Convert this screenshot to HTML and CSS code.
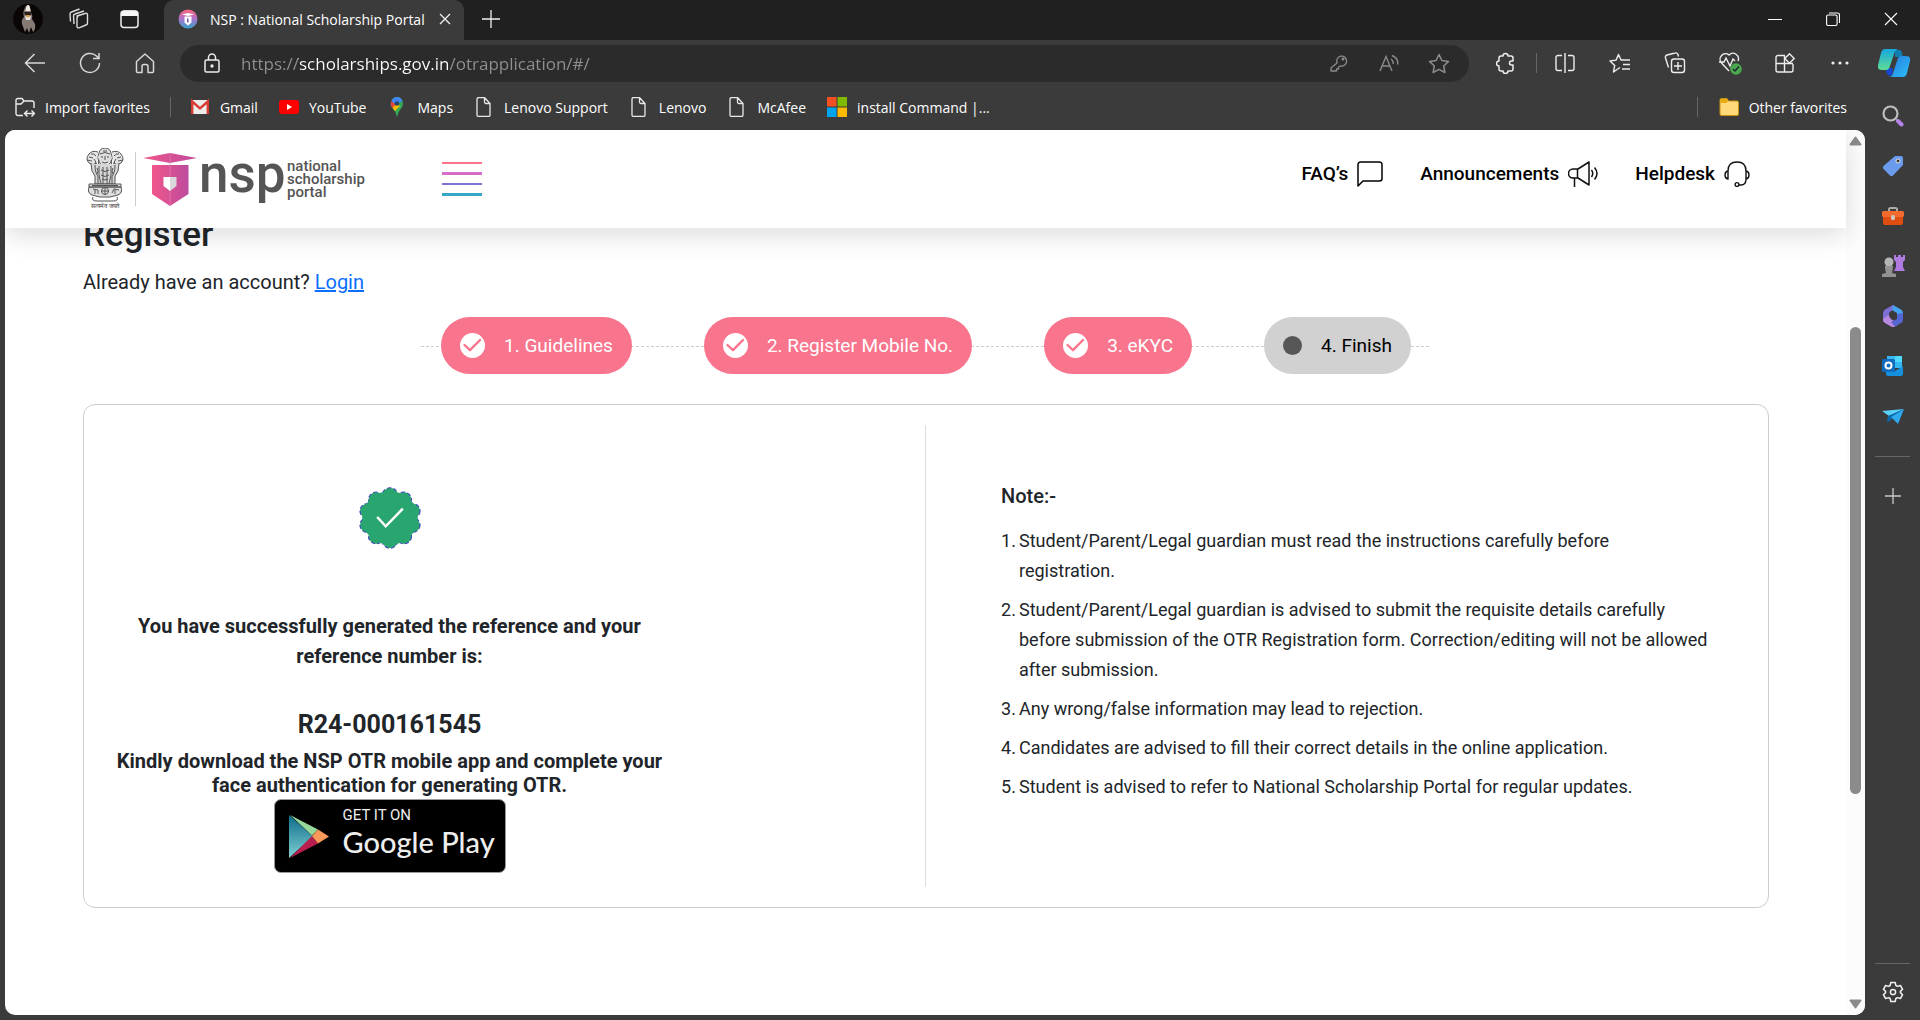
FILE: index.html
```html
<!DOCTYPE html>
<html lang="en">
<head>
<meta charset="utf-8">
<title>NSP : National Scholarship Portal</title>
<link rel="stylesheet" href="styles.css">
</head>
<body>
<svg class="defs" aria-hidden="true">
  <defs>
    <symbol id="doc" viewBox="0 0 20 20"><path d="M4.500 0.500h6l5.500 6v11.500a1.500 1.500 0 0 1-1.500 1.500h-10a1.500 1.500 0 0 1-1.500-1.500v-16a1.500 1.500 0 0 1 1.500-1.500zM10.500 0.500v4.500a1.500 1.500 0 0 0 1.500 1.500h4" fill="none" stroke="#e8e8e8" stroke-width="1.300"/></symbol>
    <symbol id="tick" viewBox="0 0 25 25"><circle cx="12.500" cy="12.500" r="12.500" fill="#fff"/><path d="M4.500 12l5.500 5.200L20 7" fill="none" stroke="#f8758d" stroke-width="2.400" stroke-linecap="round" stroke-linejoin="round"/></symbol>
  </defs>
</svg>
<div class="browser">
  <div class="tabstrip">
    <button class="tbtn" aria-label="Profile"><svg width="30" height="30" viewBox="0 0 30 30"><circle cx="15" cy="15" r="15" fill="#0b0606"/><path d="M13 2q3-2 4 1l1 5q2 4 1 7l3 5q1 5-2 8l-2-5-2 6-2-5-2 4-3-8q-1-4 2-7-2-5 2-11z" fill="#857b74"/><path d="M13.500 2q2-2 3 0l1 5h-5zM12 12q3 1 6 0l-1 4h-4z" fill="#ece8e2"/><path d="M11 8l8 0-1 3-6 0z" fill="#2a211c"/><path d="M13 11l4 0-2 3z" fill="#d99a2b"/></svg></button>
    <button class="tbtn" aria-label="Workspaces"><svg width="24" height="24" viewBox="0 0 24 24" fill="none" stroke="#dcdcdc" stroke-width="1.400" stroke-linejoin="round"><path d="M10 9l8-2.500a1.500 1.500 0 0 1 2.500 1.200v8.300a2 2 0 0 1-1.500 2l-7 2.800a1.500 1.500 0 0 1-2-1.500v-8.500a2 2 0 0 1 1-1.500zM7 17l-.5-8a2 2 0 0 1 1.500-2l9-3M3.500 14.500l-.5-7.500a2 2 0 0 1 1.500-2l8-3"/></svg></button>
    <button class="tbtn" aria-label="Tab actions"><svg width="20" height="20" viewBox="0 0 20 20"><rect x="1" y="2" width="17" height="16.500" rx="3" fill="none" stroke="#eee" stroke-width="1.500"/><path d="M1 7V5a4 4 0 0 1 3-3.500h11A4 4 0 0 1 18 5v2z" fill="#f5f5f5"/></svg></button>
    <div class="tab">
      <svg width="20" height="20" viewBox="0 0 20 20"><defs><linearGradient id="fav" x1="0" y1="0" x2="0" y2="1"><stop offset="0" stop-color="#ff667f"/><stop offset=".5" stop-color="#a873cc"/><stop offset="1" stop-color="#36a5c9"/></linearGradient></defs><circle cx="10" cy="10" r="9.500" fill="url(#fav)"/><path d="M4 5.500l6-1.500 6 1.500-6 1.500zM6.500 7.500h7v6l-3.500 3-3.500-3z" fill="#fff"/><path d="M9 9.500h1.500v4H9z" fill="#765ba0"/></svg>
      <span class="tabtitle">NSP : National Scholarship Portal</span>
      <button class="tabclose" aria-label="Close tab"><svg width="12" height="12" viewBox="0 0 12 12"><path d="M1 1l10 10M11 1L1 11" stroke="#f0f0f0" stroke-width="1.300"/></svg></button>
    </div>
    <button class="newtab" aria-label="New tab"><svg width="18" height="18" viewBox="0 0 18 18"><path d="M9 0v18M0 9h18" stroke="#f0f0f0" stroke-width="1.300"/></svg></button>
    <div class="wincontrols">
      <button class="winbtn" aria-label="Minimize"><svg width="14" height="14" viewBox="0 0 14 14"><path d="M0 7.500h14" stroke="#fff"/></svg></button>
      <button class="winbtn" aria-label="Restore"><svg width="14" height="14" viewBox="0 0 14 14" fill="none" stroke="#fff" stroke-width="1.100"><rect x=".6" y="3" width="10.500" height="10.500" rx="1.500"/><path d="M3 1h8.500a2 2 0 0 1 2 2v8"/></svg></button>
      <button class="winbtn" aria-label="Close"><svg width="14" height="14" viewBox="0 0 14 14"><path d="M1 1l12 12M13 1L1 13" stroke="#fff" stroke-width="1.100"/></svg></button>
    </div>
  </div>

  <div class="toolbar">
    <button class="tool" aria-label="Back"><svg width="22" height="20" viewBox="0 0 22 20" fill="none" stroke="#d8d8d8" stroke-width="1.500"><path d="M21 10H1.500M10.500 1L1.500 10l9 9"/></svg></button>
    <button class="tool" aria-label="Refresh"><svg width="22" height="22" viewBox="0 0 22 22" fill="none" stroke="#d8d8d8" stroke-width="1.500"><path d="M20.500 11a9.500 9.500 0 1 1-3-7l2.500 2.500M20 1v5.500h-6"/></svg></button>
    <button class="tool" aria-label="Home"><svg width="20" height="22" viewBox="0 0 20 22" fill="none" stroke="#d8d8d8" stroke-width="1.500" stroke-linejoin="round"><path d="M1.500 9.500L10 2l8.500 7.500v10a1 1 0 0 1-1 1H13v-6a2 2 0 0 0-2-2H9a2 2 0 0 0-2 2v6H2.500a1 1 0 0 1-1-1z"/></svg></button>
    <div class="address">
      <svg width="16" height="20" viewBox="0 0 16 20" fill="none" stroke="#ededed" stroke-width="1.500"><rect x="1" y="7" width="14" height="12" rx="1.500"/><path d="M4.500 7V4.500a3.500 3.500 0 0 1 7 0V7"/><circle cx="8" cy="13" r=".9" fill="#fff"/></svg>
      <input class="url" type="text" aria-label="Address" value="https://scholarships.gov.in/otrapplication/#/">
      <button class="inbar" aria-label="Passwords"><svg width="18" height="18" viewBox="0 0 18 18" fill="none" stroke="#8c8c8c" stroke-width="1.300"><path d="M7 9a5 5 0 1 1 3.500 3L8.500 13v2h-2v2H1v-3z" stroke-linejoin="round"/><circle cx="13" cy="5" r=".9"/></svg></button>
      <button class="inbar" aria-label="Read aloud"><svg width="20" height="18" viewBox="0 0 20 18" fill="none" stroke="#8c8c8c" stroke-width="1.400"><path d="M1 17L7 2.500 13 17M3.200 12h7.600M12 5q3 2 2 5M13 1.500q7 3 5.500 9"/></svg></button>
      <button class="inbar" aria-label="Add to favorites"><svg width="22" height="21" viewBox="0 0 22 21" fill="none" stroke="#8c8c8c" stroke-width="1.500" stroke-linejoin="round"><path d="M11 1.500l2.900 6 6.600.9-4.800 4.600 1.200 6.500L11 16.400l-5.900 3.100 1.200-6.500L1.500 8.400l6.600-.9z"/></svg></button>
    </div>
    <button class="tool ext" aria-label="Extensions"><svg width="20" height="22" viewBox="0 0 20 22" fill="none" stroke="#ededed" stroke-width="1.500" stroke-linejoin="round"><path d="M5 4h2a2.500 2.500 0 0 1 5 0h3a2 2 0 0 1 2 2v3h-1.500a2 2 0 0 0 0 4H17v4a2 2 0 0 1-2 2h-3a2.500 2.500 0 0 1-5 0H5a2 2 0 0 1-2-2v-3a2.500 2.500 0 0 1 0-5V6a2 2 0 0 1 2-2z"/></svg></button>
    <span class="vline"></span>
    <button class="tool" aria-label="Split screen"><svg width="20" height="20" viewBox="0 0 20 20" fill="none" stroke="#ededed" stroke-width="1.400"><path d="M10 0v20M7 2.500H3A2 2 0 0 0 1 4.500v11a2 2 0 0 0 2 2h4M13 2.500h4a2 2 0 0 1 2 2v11a2 2 0 0 1-2 2h-4"/></svg></button>
    <button class="tool" aria-label="Favorites"><svg width="22" height="20" viewBox="0 0 22 20" fill="none" stroke="#ededed" stroke-width="1.400" stroke-linejoin="round"><path d="M11 14.500l-1.500 1L4.500 19l1.200-6.500L1 8l6-.9L9.500 1.500 12 7h9M14 11.500h7M13 16h8"/></svg></button>
    <button class="tool" aria-label="Collections"><svg width="22" height="22" viewBox="0 0 22 22" fill="none" stroke="#ededed" stroke-width="1.400"><rect x="7.500" y="7" width="13" height="13.500" rx="2.500"/><path d="M14 10v8M10 14h8M4.500 15.500L1.500 6A2.500 2.500 0 0 1 3 3l8-2a2.500 2.500 0 0 1 3 1.500l.5 2"/></svg></button>
    <button class="tool" aria-label="Browser essentials"><svg width="24" height="24" viewBox="0 0 24 24" fill="none" stroke="#ededed" stroke-width="1.400"><path d="M11 20l-7.500-8A5.500 5.500 0 0 1 11 4a5.500 5.500 0 0 1 9 6M1 11h5l2-4 4 8 3-7 2 2"/><circle cx="18" cy="18" r="5.800" fill="#48a94e" stroke="none"/><path d="M15 18l2 2 4-4.500" stroke="#223"/></svg></button>
    <button class="tool" aria-label="Apps"><svg width="20" height="20" viewBox="0 0 20 20" fill="none" stroke="#ededed" stroke-width="1.400"><path d="M10 2.500H3A2 2 0 0 0 1 4.500V17a2 2 0 0 0 2 2h13a2 2 0 0 0 2-2v-6M1 10.500h17M9.500 2.500V19"/><path d="M14.500 0.800L19.200 5.500l-4.700 4.700L9.800 5.500z" fill="#3b3b3b" stroke-linejoin="round"/></svg></button>
    <button class="tool" aria-label="Settings and more"><svg width="18" height="4" viewBox="0 0 18 4" fill="#ededed"><circle cx="2" cy="2" r="1.600"/><circle cx="9" cy="2" r="1.600"/><circle cx="16" cy="2" r="1.600"/></svg></button>
    <button class="copilot" aria-label="Copilot"><svg width="32" height="28" viewBox="0 0 32 28"><defs><linearGradient id="cpa" x1="0" y1="0" x2="0" y2="1"><stop offset="0" stop-color="#15a7e0"/><stop offset="1" stop-color="#60dc94"/></linearGradient><linearGradient id="cpb" x1="0" y1="0" x2="1" y2="1"><stop offset="0" stop-color="#2879e0"/><stop offset="1" stop-color="#2bc0f7"/></linearGradient></defs><path d="M17 1h4q3 0 3 4l1 3h-8z" fill="#0e7fb0"/><path d="M8 19h7l-1 7-3 1q-2-1-3-5z" fill="#1747d1"/><path d="M7 0h13q-3 1-4 5l-4 12q-1 4-4 4H4q-5 0-4-5L3 4q1-4 4-4z" fill="url(#cpa)"/><path d="M25 28H11q3 0 4-4l4-12q1-5 5-5h4q5 0 4 5l-3 12q-1 4-4 4z" fill="url(#cpb)"/></svg></button>
  </div>

  <nav class="favbar" aria-label="Favorites bar">
    <a class="fav" href="#"><svg width="20" height="20" viewBox="0 0 20 20" fill="none" stroke="#ededed" stroke-width="1.400"><path d="M8 18.500H3A2 2 0 0 1 1 16.500V3.500a2 2 0 0 1 2-2h4l2 2.500h8a2 2 0 0 1 2 2V11M1 7h5l3-3M10.500 16.500h8.500M12.500 13.500l-3 3 3 3M16.500 13.500l3 3-3 3"/></svg>Import favorites</a>
    <span class="vline favline"></span>
    <a class="fav" href="#"><svg width="20" height="20" viewBox="0 0 20 20"><path d="M1 3h18v14H1z" fill="#ececec"/><path d="M2.200 17V4.500L10 11.500l7.800-7V17" fill="none" stroke="#d93c32" stroke-width="2.400"/></svg>Gmail</a>
    <a class="fav" href="#"><svg width="20" height="20" viewBox="0 0 20 20"><rect y="3" width="20" height="14" rx="3" fill="#f00"/><path d="M8 7l5 3-5 3z" fill="#fff"/></svg>YouTube</a>
    <a class="fav" href="#"><svg width="20" height="20" viewBox="0 0 20 20"><path d="M10 20q-1-5-4-8.500Q3 7 4.500 4 6 0 10 0t5.500 4Q17 8 14 11.500 11 15 10 20z" fill="#34a853"/><path d="M10 7L4 10Q3 7 4.500 4 6 0 10 0t5.500 4z" fill="#4285f4"/><path d="M4.500 4L9 8l-4 3Q3 7 4.500 4z" fill="#ea4335"/><path d="M5.500 11L10 6l3 3-5 5z" fill="#fbbc04"/><circle cx="10" cy="6.500" r="2.300" fill="#23456b"/></svg>Maps</a>
    <a class="fav" href="#"><svg width="20" height="20"><use href="#doc"/></svg>Lenovo Support</a>
    <a class="fav" href="#"><svg width="20" height="20"><use href="#doc"/></svg>Lenovo</a>
    <a class="fav" href="#"><svg width="20" height="20"><use href="#doc"/></svg>McAfee</a>
    <a class="fav" href="#"><svg width="20" height="20" viewBox="0 0 20 20"><path d="M0 0h9.500v9.500H0z" fill="#f25022"/><path d="M10.500 0H20v9.500h-9.500z" fill="#7fba00"/><path d="M0 10.500h9.500V20H0z" fill="#00a4ef"/><path d="M10.500 10.500H20V20h-9.500z" fill="#ffb900"/></svg>install Command |...</a>
    <span class="vline otherline"></span>
    <a class="fav" href="#"><svg width="20" height="20" viewBox="0 0 20 20"><path d="M1 3a1.500 1.500 0 0 1 1.500-1.500H8l1.500 2.500h8.500a1.500 1.500 0 0 1 1.500 1.500V17a1.500 1.500 0 0 1-1.500 1.500h-15.500A1.500 1.500 0 0 1 1 17z" fill="#ffd97a" stroke="#c9920e"/><path d="M1.500 2h6.500l1 2-1.500 2h-6z" fill="#e9ab12"/></svg>Other favorites</a>
  </nav>

  <div class="workspace">
    <div class="viewport">
      <div class="page">
        <header class="site-header">
          <a class="brand" href="#" aria-label="National Scholarship Portal">
            <span class="emblem">
              <svg width="38" height="54" viewBox="0 0 38 54" fill="none" stroke="#555" stroke-width="1"><path d="M13 5q1-5 6-5t6 5q3 5 0 9-2 4-6 4t-6-4q-3-5 0-9z" fill="#ddd"/><path d="M14 6q5-3 10 0M15 9h2M21 9h2M19 8v4M16 14q3 2 6 0M17 3h4M13 12q-2 3 1 6M25 12q2 3-1 6"/><path d="M12 4Q6 2 3 6q-4 5 0 9 4 3 8 0M26 4q6-2 9 2 4 5 0 9-4 3-8 0" fill="#e4e4e4"/><path d="M3 9l4 1M1 12l5 1M5 6q3-1 5 2M8 11q3 3 1 6M35 9l-4 1M37 12l-5 1M33 6q-3-1-5 2M30 11q-3 3-1 6"/><path d="M5 16q0 8 4 12v8h20v-8q4-4 4-12" fill="#d6d6d6"/><path d="M9 17q0 8 3 11v8M13 18q-1 9 2 18M17 19v17M21 19v17M25 18q1 9-2 18M29 17q0 8-3 11v8M11 20q2 3 0 6M27 20q-2 3 0 6M15 22q4 3 8 0M15 27q4 3 8 0M16 31q3 2 6 0"/><path d="M3 36h32v3H3zM3 39q-2 6 3 8l8 2h10l8-2q5-2 3-8z" fill="#ddd"/><circle cx="19" cy="43" r="3.500"/><path d="M19 39v8M15 43h8M7 41l5 1v4M9 46v-4M26 45l2-4 5 1M29 42v4M7 49q-2 4 4 4h16q6 0 4-4M6 37.500h26" /></svg>
              <span class="motto">सत्यमेव जयते</span>
            </span>
            <span class="brand-line"></span>
            <svg width="54" height="53" viewBox="0 0 54 53"><defs><linearGradient id="nsp" x1="0" y1="0" x2="1" y2="0"><stop offset="0" stop-color="#f1568b"/><stop offset="1" stop-color="#bd4b9e"/></linearGradient></defs><path d="M0 5L27 0l27 5-27 5z" fill="url(#nsp)"/><path d="M9 12h36.500v29L27 53 9 41z" fill="url(#nsp)"/><path d="M27 0v53" stroke="#e486b5" stroke-width=".6"/><path d="M20.500 24H27v14l-6.500-5z" fill="#fff"/><path d="M27 24h6.500v9L27 38z" fill="#dcd7dc"/></svg>
            <span class="wordmark">nsp</span>
            <span class="brand-name">national<br>scholarship<br>portal</span>
          </a>
          <button class="menu" aria-label="Menu"><span class="bar rose"></span><span class="bar orchid"></span><span class="bar violet"></span><span class="bar teal"></span></button>
          <nav class="site-nav" aria-label="Site">
            <a class="navlink" href="#">FAQ’s <svg width="26" height="26" viewBox="0 0 26 26" fill="none" stroke="#000" stroke-width="1.500" stroke-linejoin="round"><path d="M1 25V3.500A2.500 2.500 0 0 1 3.500 1h19A2.500 2.500 0 0 1 25 3.500v14a2.500 2.500 0 0 1-2.500 2.500H6z"/></svg></a>
            <a class="navlink" href="#">Announcements <svg width="30" height="26" viewBox="0 0 30 26" fill="none" stroke="#111" stroke-width="1.500" stroke-linejoin="round"><path d="M10 8L21 1v23l-11-7H5a4.500 4.500 0 0 1 0-9zM9.500 8v9M6.500 17v9M23.500 9q2.500 3.500 0 7M26.500 6.500q5 6 0 12"/></svg></a>
            <a class="navlink" href="#">Helpdesk <svg width="26" height="26" viewBox="0 0 26 26" fill="none" stroke="#111" stroke-width="1.400"><path d="M4 10Q4 1 13 1t9 9v8q0 6-5 6h-2M4 10v8q-3-.5-3-4t3-4zM22 10v8q3-.5 3-4t-3-4z"/><circle cx="13" cy="23.500" r="1.900"/></svg></a>
          </nav>
        </header>

        <main class="content">
          <h1 class="title">Register</h1>
          <p class="account">Already have an account? <a class="login" href="#">Login</a></p>

          <ol class="steps">
            <li class="step"><svg width="25" height="25"><use href="#tick"/></svg>1. Guidelines</li>
            <li class="step"><svg width="25" height="25"><use href="#tick"/></svg>2. Register Mobile No.</li>
            <li class="step"><svg width="25" height="25"><use href="#tick"/></svg>3. eKYC</li>
            <li class="step current"><span class="dot"></span>4. Finish</li>
          </ol>

          <div class="card">
            <section class="result">
              <svg class="seal" width="62" height="62" viewBox="1 0 58 60" preserveAspectRatio="none"><g fill="#29a66f" stroke="#4545c4" stroke-width="1.500" stroke-dasharray="4 2"><circle cx="30" cy="8" r="7"/><circle cx="42.900" cy="12.200" r="7"/><circle cx="17.100" cy="12.200" r="7"/><circle cx="50.900" cy="23.200" r="7"/><circle cx="9.100" cy="23.200" r="7"/><circle cx="50.900" cy="36.800" r="7"/><circle cx="9.100" cy="36.800" r="7"/><circle cx="42.900" cy="47.800" r="7"/><circle cx="17.100" cy="47.800" r="7"/><circle cx="30" cy="52" r="7"/></g><g fill="#29a66f"><circle cx="30" cy="30" r="26"/><circle cx="30" cy="8" r="6.800"/><circle cx="42.900" cy="12.200" r="6.800"/><circle cx="17.100" cy="12.200" r="6.800"/><circle cx="50.900" cy="23.200" r="6.800"/><circle cx="9.100" cy="23.200" r="6.800"/><circle cx="50.900" cy="36.800" r="6.800"/><circle cx="9.100" cy="36.800" r="6.800"/><circle cx="42.900" cy="47.800" r="6.800"/><circle cx="17.100" cy="47.800" r="6.800"/><circle cx="30" cy="52" r="6.800"/></g><path d="M18 29l8 9 16-17" fill="none" stroke="#fff" stroke-width="2.400"/></svg>
              <p class="success">You have successfully generated the reference and your reference number is:</p>
              <h2 class="refno">R24-000161545</h2>
              <p class="download">Kindly download the NSP OTR mobile app and complete your face authentication for generating OTR.</p>
              <a class="play" href="#">
                <svg width="40" height="43" viewBox="0 0 40 43"><defs><linearGradient id="pl" x1="0" y1="0" x2="0" y2="1"><stop offset="0" stop-color="#0c6b8b"/><stop offset="1" stop-color="#7fd0d3"/></linearGradient></defs><path d="M0 0v43l24-21.500z" fill="url(#pl)"/><path d="M1 0l28 14.500-6 6z" fill="#97d89c"/><path d="M1 43l22-22 6 7.500z" fill="#b81f4e"/><path d="M29 14.500L40 21.500l-11 7-6-7.500z" fill="#f9995a"/></svg>
                <span class="play-text"><span class="play-small">GET IT ON</span><span class="play-big">Google Play</span></span>
              </a>
            </section>
            <section class="notes">
              <h3 class="notes-title">Note:-</h3>
              <ol class="notes-list">
                <li>Student/Parent/Legal guardian must read the instructions carefully before<br>registration.</li>
                <li>Student/Parent/Legal guardian is advised to submit the requisite details carefully before submission of the OTR Registration form. Correction/editing will not be allowed after submission.</li>
                <li>Any wrong/false information may lead to rejection.</li>
                <li>Candidates are advised to fill their correct details in the online application.</li>
                <li>Student is advised to refer to National Scholarship Portal for regular updates.</li>
              </ol>
            </section>
          </div>
        </main>
      </div>
      <div class="scrollbar" aria-hidden="true">
        <svg width="13" height="10" viewBox="0 0 13 10"><path d="M6.500 1.500L11.500 8.500h-10z" fill="#8b8b8b" stroke="#8b8b8b" stroke-width="2" stroke-linejoin="round"/></svg>
        <div class="track"><span class="before"></span><span class="thumb"></span><span class="after"></span></div>
        <svg width="13" height="10" viewBox="0 0 13 10"><path d="M6.500 8.500L11.500 1.500h-10z" fill="#8b8b8b" stroke="#8b8b8b" stroke-width="2" stroke-linejoin="round"/></svg>
      </div>
    </div>

    <aside class="sidebar" aria-label="Sidebar">
      <button class="side" aria-label="Search"><svg width="22" height="22" viewBox="0 0 22 22" fill="none"><path d="M14 14l3 3" stroke="#999" stroke-width="2"/><path d="M16 16l3.500 3.500" stroke="#b583ea" stroke-width="4" stroke-linecap="round"/><circle cx="8.500" cy="8.500" r="7" stroke="#bdbdbd" stroke-width="2.200"/></svg></button>
      <button class="side" aria-label="Shopping"><svg width="22" height="22" viewBox="0 0 22 22"><path d="M13 1h6a2 2 0 0 1 2 2v7L11 20.500q-1.500 1.500-3 0L1.500 14q-1.500-1.500 0-3z" fill="#6b9bec"/><circle cx="16" cy="6" r="2" fill="#333" stroke="#e8e8e8"/></svg></button>
      <button class="side" aria-label="Tools"><svg width="22" height="18" viewBox="0 0 22 18"><path d="M7 5V2.500A1.500 1.500 0 0 1 8.500 1h5A1.500 1.500 0 0 1 15 2.500V5" fill="none" stroke="#aaa" stroke-width="2"/><rect y="4" width="22" height="6" rx="1.500" fill="#f26a2e"/><path d="M1 10h20v6a2 2 0 0 1-2 2H3a2 2 0 0 1-2-2z" fill="#dd4e10"/><rect x="9" y="8" width="4" height="5" rx="1.500" fill="#cfc6c0"/></svg></button>
      <button class="side" aria-label="Games"><svg width="24" height="24" viewBox="0 0 24 24"><path d="M13 1h2v2h2V1h3v2h2V1h2v5l-2 2v5l2 4H13l2-4V8l-2-2z" fill="#b07be0"/><circle cx="8" cy="8" r="4.500" fill="#b5b5b5"/><path d="M4 12h8v2l-1 5 4 1v3H1v-3l4-1-1-5z" fill="#929292"/></svg></button>
      <button class="side" aria-label="Microsoft 365"><svg width="22" height="22" viewBox="0 0 22 22"><path d="M11 0L3 4.500Q1 6 1 8v8l6 1V9q0-2 2-3l5-2.500z" fill="#7d6fd6"/><path d="M11 0l8 4.500q2 1.500 2 3.500v5l-6-3.500V8l-5-3z" fill="#45a4ef"/><path d="M1 14v1q0 2 2 3l6 3.500q2 1 4 0l4-2.500-8-5q-2-1.500-2-4z" fill="#b78ae2"/><path d="M21 8v7q0 2-2 3l-6 3.500-4-4.500 6-3V9z" fill="#5566d2"/></svg></button>
      <button class="side" aria-label="Outlook"><svg width="22" height="20" viewBox="0 0 22 20"><path d="M5 0h15v12H5z" fill="#35b8f1"/><path d="M13 0h7v6h-7z" fill="#50d9ff"/><path d="M4 10l9 5 8-5v8q0 2-2 2H6q-2 0-2-2z" fill="#1490df"/><rect y="3" width="13" height="13" rx="1.500" fill="#0f6cbd"/><circle cx="6.500" cy="9.500" r="3" fill="none" stroke="#fff" stroke-width="2"/></svg></button>
      <button class="side" aria-label="Drop"><svg width="22" height="16" viewBox="0 0 22 16"><path d="M0 3L22 1 7 8z" fill="#5bd0fa"/><path d="M22 1L6 8l-1 7 5-4z" fill="#0c67a9"/><path d="M22 1L9 9l7 7z" fill="#2ea9ee"/></svg></button>
      <span class="side-line"></span>
      <button class="side add" aria-label="Customize"><svg width="16" height="16" viewBox="0 0 16 16"><path d="M8 0v16M0 8h16" stroke="#c8c8c8" stroke-width="1.300"/></svg></button>
      <span class="spacer"></span>
      <span class="side-line"></span>
      <button class="side settings" aria-label="Settings"><svg width="22" height="22" viewBox="0 0 22 22" fill="none" stroke="#f0f0f0" stroke-width="1.500" stroke-linejoin="round"><path d="M8.800 1.500h4.400l.7 3 1.500.9 3-.9 2.200 3.800-2.200 2.100v1.200l2.200 2.100-2.200 3.800-3-.9-1.500.9-.7 3H8.800l-.7-3-1.500-.9-3 .9-2.200-3.800 2.200-2.100v-1.200L1.400 8.300l2.200-3.800 3 .9 1.500-.9z"/><circle cx="11" cy="11" r="2.600"/></svg></button>
    </aside>
  </div>
</div>
</body>
</html>
```
FILE: styles.css
```css
*{box-sizing:border-box}
body{margin:0;font-family:Roboto,"Liberation Sans",sans-serif;color:#212529;background:#3b3b3b}
button{border:0;padding:0;background:none;font:inherit;color:inherit;display:flex;align-items:center;justify-content:center}
a{color:inherit;text-decoration:none}
svg{flex:none;display:block}
p,h1,h2,h3,ol{margin:0;padding:0}
.defs{position:absolute;width:0;height:0}

.browser{display:flex;flex-direction:column;min-height:100vh;font-family:"Open Sans","Noto Sans",sans-serif;font-size:14px;color:#fff}

/* Tab strip */
.tabstrip{display:flex;height:40px;background:#202020;padding:0 0 2px 2px}
.tbtn{width:51px}
.tab{width:300px;height:40px;margin-left:9px;padding:0 9px 2px 14px;display:flex;align-items:center;background:#3b3b3b;border-radius:10px 10px 0 0}
.tabtitle{margin-left:12px;flex:1;white-space:nowrap}
.tabclose{width:20px;height:20px}
.newtab{width:54px}
.wincontrols{display:flex;margin-left:auto}
.winbtn{width:58px}

/* Toolbar */
.toolbar{display:flex;align-items:center;height:48px;padding:0 0 2px 7px}
.tool{width:55px;height:36px}
.ext{margin:0 3px 0 9px}
.copilot{width:53px;height:36px}
.vline{width:1px;height:20px;background:#666}
.address{flex:1;display:flex;align-items:center;height:37px;margin-left:8px;padding:0 5px 0 24px;border-radius:19px;background:#2b2b2b}
.url{flex:1;min-width:0;border:0;outline:0;padding:0;margin-left:21px;height:30px;font:17px "Open Sans","Noto Sans",sans-serif;color:#909090;-webkit-text-fill-color:transparent;background:linear-gradient(90deg,#909090 57px,#fff 57px,#fff 208px,#909090 208px);-webkit-background-clip:text;background-clip:text}
.inbar{width:50px;height:36px}

/* Favorites bar */
.favbar{display:flex;align-items:center;gap:21px;height:42px;padding:0 73px 4px 15px}
.fav{display:flex;align-items:center;gap:10px;white-space:nowrap}
.favline{margin:0 -2px 0 -1px}
.otherline{margin-left:auto}

/* Page area and sidebar */
.workspace{flex:1;display:flex;padding:0 0 5px 5px}
.viewport{flex:1;min-width:0;display:flex;border-radius:10px;overflow:hidden;background:#fff}
.page{flex:1;min-width:0;font-family:Roboto,"Liberation Sans",sans-serif;color:#212529}
.scrollbar{width:19px;background:#fcfcfc;display:flex;flex-direction:column;align-items:center;padding:6px 0}
.track{flex:1;display:flex;flex-direction:column;align-items:center;width:11px}
.before{flex:181}
.thumb{flex:467;width:11px;border-radius:6px;background:#8b8b8b}
.after{flex:205}
.sidebar{width:55px;margin:-39px 0 -5px;display:flex;flex-direction:column;align-items:center}
.side{width:50px;height:50px}
.side-line{width:35px;height:1px;background:#666}
.side-line:first-of-type{margin-top:15px}
.add{margin-top:14px}
.spacer{flex:1}
.settings{height:56px}

/* Site header */
.site-header{position:relative;z-index:1;display:flex;align-items:center;height:98px;padding:0 96px 0 81px;background:#fff;box-shadow:0 8px 24px rgba(0,0,0,.13)}
.brand{display:flex;align-items:center;height:64px}
.emblem{display:flex;flex-direction:column;align-items:center;width:38px}
.motto{font-size:6px;line-height:8px;white-space:nowrap;color:#333}
.brand-line{width:1px;height:54px;margin:0 7px 0 11px;background:#ccc}
.wordmark{width:86px;margin-left:2px;font:500 53px/48px Roboto,sans-serif;color:#555;padding-bottom:10px}
.brand-name{width:79px;margin-left:2px;font-size:15px;line-height:13px;font-weight:500;color:#555}
.menu{width:40px;margin-left:76px;display:flex;flex-direction:column;gap:8px}
.bar{width:40px;height:2px}
.rose{background:#fb748c}
.orchid{background:#d66bc9;height:3px}
.violet{background:#7b73d6}
.teal{background:#34a6c7;height:3px}
.site-nav{margin-left:auto;display:flex;gap:37px;padding-bottom:11px}
.navlink{display:flex;align-items:center;gap:9px;font-size:19px;font-weight:500;color:#000}

/* Registration content */
.content{padding:0 77px 48px 78px}
.title{margin-top:-13px;font-size:35px;line-height:40px;font-weight:500}
.account{margin-top:12px;font-size:20px;line-height:30px}
.login{color:#0d6efd;text-decoration:underline}
.steps{list-style:none;display:flex;width:max-content;margin:20px auto 30px;padding:0 20px;gap:72px;background:repeating-linear-gradient(90deg,#ccc 0 3px,transparent 3px 5px) 0 29px/100% 1px no-repeat}
.step{display:flex;align-items:center;gap:19px;height:57px;padding:0 19px;border-radius:29px;background:#f8758d;color:#fff;font-size:19px;white-space:nowrap}
.current{background:#d1d1d1;color:#000}
.dot{width:19px;height:19px;border-radius:50%;background:#575757}
.card{display:grid;grid-template-columns:1fr 1fr;border:1px solid #ccc;border-radius:12px;padding:20px 0}
.result{display:flex;flex-direction:column;align-items:center;padding:62px 230px 14px 0;border-right:1px solid #ddd;text-align:center;font-weight:700}
.seal{margin-bottom:62px}
.success{width:560px;font-size:20px;line-height:30px}
.refno{margin-top:38px;font-size:25px;line-height:32px;font-weight:700}
.download{margin-top:8px;width:560px;font-size:20px;line-height:24px}
.play{display:flex;align-items:center;gap:14px;width:232px;height:74px;margin-top:2px;padding-left:14px;border:1px solid #999;border-radius:7px;background:#000;color:#eee;text-align:left}
.play-text{display:flex;flex-direction:column;padding-bottom:6px;white-space:nowrap}
.play-small{font-size:15px;line-height:18px;font-weight:400}
.play-big{font:500 29px/36px Lato,sans-serif}
.notes{padding:56px 56px 0 75px}
.notes-title{font-size:20px;line-height:30px;font-weight:500}
.notes-list{margin-top:15px;padding-left:18px;display:flex;flex-direction:column;gap:9px;font-size:18px;line-height:30px;list-style:none;counter-reset:n}
.notes-list li{counter-increment:n}
.notes-list li::before{content:counter(n) ".";display:inline-block;width:18px;margin-left:-18px}
```
